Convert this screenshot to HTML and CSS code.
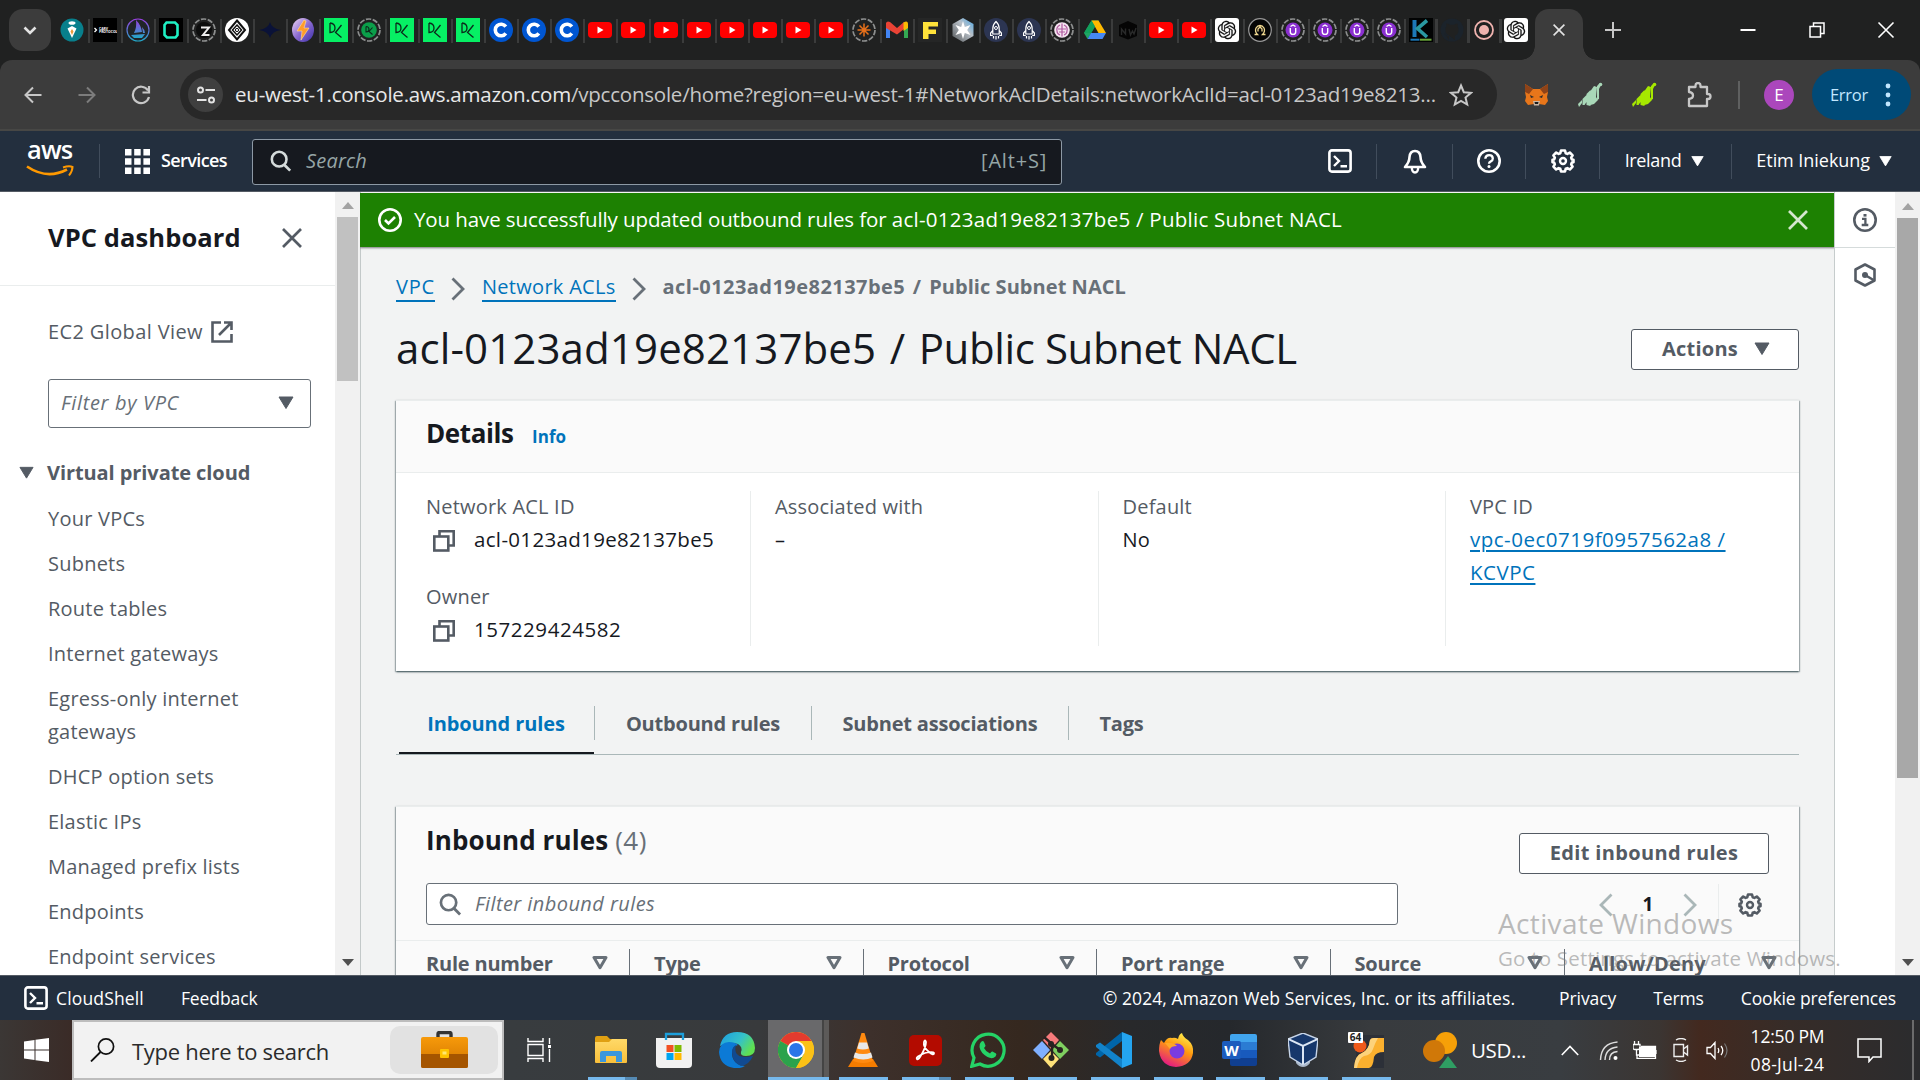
FILE: index.html
```
<!DOCTYPE html>
<html lang="en">
<head>
<meta charset="utf-8">
<title>VPC Console</title>
<link rel="stylesheet" href="styles.css">
</head>
<body>
<svg class="defs" width="0" height="0">
  <defs>
    <linearGradient id="gPurple" x1="0" y1="0" x2="0" y2="1"><stop offset="0" stop-color="#9a3fe0"/><stop offset="1" stop-color="#22a8c8"/></linearGradient>
    <linearGradient id="gZap" x1="0" y1="0" x2="1" y2="1"><stop offset="0" stop-color="#f0d8f4"/><stop offset=".5" stop-color="#8a6ad0"/><stop offset="1" stop-color="#3b2fa8"/></linearGradient>
    <linearGradient id="gHex" x1="1" y1="0" x2="0" y2="1"><stop offset="0" stop-color="#4aa8e8"/><stop offset=".4" stop-color="#b8c0c8"/><stop offset="1" stop-color="#55585a"/></linearGradient>
    <linearGradient id="gEdge" x1="0" y1="0" x2="1" y2=".5"><stop offset="0" stop-color="#1b9de2"/><stop offset=".6" stop-color="#35c1c9"/><stop offset="1" stop-color="#5fe052"/></linearGradient>
    <linearGradient id="gFox" x1=".8" y1="0" x2=".3" y2="1"><stop offset="0" stop-color="#fff44f"/><stop offset=".45" stop-color="#ff980e"/><stop offset="1" stop-color="#e31587"/></linearGradient>
    <linearGradient id="gCase" x1="0" y1="0" x2="0" y2="1"><stop offset="0" stop-color="#f79a0a"/><stop offset="1" stop-color="#d07400"/></linearGradient>
    <linearGradient id="gFolder" x1="0" y1="0" x2="0" y2="1"><stop offset="0" stop-color="#ffd968"/><stop offset="1" stop-color="#f9bf3a"/></linearGradient>
    <symbol id="yt" viewBox="0 0 24 24"><rect x="0" y="4" width="24" height="16" rx="4" fill="#f00"/><path d="M9.500 8.600v6.800l6-3.400z" fill="#fff"/></symbol>
    <symbol id="dc" viewBox="0 0 24 24"><rect width="24" height="24" fill="#06f064"/><path d="M6 5v9.500q5 0 5-4.500T6 5M17.500 7l-6 7.500 6 5" fill="none" stroke="#0b2a1c" stroke-width="1.300"/></symbol>
    <symbol id="cc" viewBox="0 0 24 24"><circle cx="12" cy="12" r="12" fill="#0056d2"/><path d="M16.800 8.600a5.800 5.800 0 1 0 0 6.800" fill="none" stroke="#fff" stroke-width="3.600"/></symbol>
    <symbol id="ring" viewBox="0 0 24 24"><circle cx="12" cy="12" r="11" fill="none" stroke="#8d8f8f" stroke-width="1.700" stroke-dasharray="5.400 1.510"/></symbol>
    <symbol id="gpt" viewBox="0 0 24 24"><rect width="24" height="24" rx="3" fill="#fff"/><path transform="translate(2.800 2.800) scale(.766)" fill="#111" stroke="#111" stroke-width=".2" d="M22.2819 9.8211a5.9847 5.9847 0 0 0-.5157-4.9108 6.0462 6.0462 0 0 0-6.5098-2.9A6.0651 6.0651 0 0 0 4.9807 4.1818a5.9847 5.9847 0 0 0-3.9977 2.9 6.0462 6.0462 0 0 0 .7427 7.0966 5.98 5.98 0 0 0 .511 4.9107 6.051 6.051 0 0 0 6.5146 2.9001A5.9847 5.9847 0 0 0 13.2599 24a6.0557 6.0557 0 0 0 5.7718-4.2058 5.9894 5.9894 0 0 0 3.9977-2.9001 6.0557 6.0557 0 0 0-.7475-7.0729zm-9.022 12.6081a4.4755 4.4755 0 0 1-2.8764-1.0408l.1419-.0804 4.7783-2.7582a.7948.7948 0 0 0 .3927-.6813v-6.7369l2.02 1.1686a.071.071 0 0 1 .038.052v5.5826a4.504 4.504 0 0 1-4.4945 4.4944zm-9.6607-4.1254a4.4708 4.4708 0 0 1-.5346-3.0137l.142.0852 4.783 2.7582a.7712.7712 0 0 0 .7806 0l5.8428-3.3685v2.3324a.0804.0804 0 0 1-.0332.0615L9.74 19.9502a4.4992 4.4992 0 0 1-6.1408-1.6464zM2.3408 7.8956a4.485 4.485 0 0 1 2.3655-1.9728V11.6a.7664.7664 0 0 0 .3879.6765l5.8144 3.3543-2.0201 1.1685a.0757.0757 0 0 1-.071 0l-4.8303-2.7865A4.504 4.504 0 0 1 2.3408 7.872zm16.5963 3.8558L13.1038 8.364 15.1192 7.2a.0757.0757 0 0 1 .071 0l4.8303 2.7913a4.4944 4.4944 0 0 1-.6765 8.1042v-5.6772a.79.79 0 0 0-.407-.667zm2.0107-3.0231l-.142-.0852-4.7735-2.7818a.7759.7759 0 0 0-.7854 0L9.409 9.2297V6.8974a.0662.0662 0 0 1 .0284-.0615l4.8303-2.7866a4.4992 4.4992 0 0 1 6.6802 4.66zM8.3065 12.863l-2.02-1.1638a.0804.0804 0 0 1-.038-.0567V6.0742a4.4992 4.4992 0 0 1 7.3757-3.4537l-.142.0805L8.704 5.459a.7948.7948 0 0 0-.3927.6813zm1.0976-2.3654l2.602-1.4998 2.6069 1.4998v2.9994l-2.5974 1.4997-2.6067-1.4997Z"/></symbol>
    <symbol id="rocket" viewBox="0 0 24 24"><circle cx="12" cy="12" r="12" fill="#2c3552"/><path d="M12 3.500q3.200 3 3.200 7v5.500H8.800v-5.500q0-4 3.200-7zM8.800 12.500L6.600 15v2.500h2.200M15.200 12.500l2.200 2.500v2.500h-2.200M9.500 18v2.500M12 18v3.500M14.500 18v2.500" fill="none" stroke="#fff" stroke-width="1.200"/><circle cx="12" cy="10" r="1.500" fill="none" stroke="#fff"/></symbol>
    <symbol id="udemy" viewBox="0 0 24 24"><circle cx="12" cy="12" r="11" fill="none" stroke="#8d8f8f" stroke-width="1.700" stroke-dasharray="5.400 1.510"/><circle cx="12" cy="12" r="7.500" fill="#8a2fd0"/><path d="M9.300 10v4q0 2.400 2.700 2.400t2.700-2.400v-4M9.500 8.500L12 7l2.500 1.500" fill="none" stroke="#fff" stroke-width="1.400"/></symbol>
    <symbol id="gear" viewBox="0 0 24 24"><path d="M10 1.500h4l.7 2.700 1.700.7 2.400-1.400 2.800 2.800-1.400 2.400.7 1.700 1.600.4v2.400l-1.600.4-.7 1.700 1.400 2.400-2.800 2.800-2.400-1.400-1.700.7-.7 2.700h-4l-.7-2.700-1.700-.7-2.400 1.400-2.800-2.800 1.400-2.400-.7-1.700-1.600-.4v-2.400l1.600-.4.7-1.700-1.400-2.400 2.800-2.800 2.400 1.400 1.700-.7z" fill="none" stroke="currentColor" stroke-width="2.600" stroke-linejoin="round"/><circle cx="12" cy="12" r="3" fill="none" stroke="currentColor" stroke-width="2.400"/></symbol>
    <symbol id="shell" viewBox="0 0 24 24"><rect x="1.400" y="1.400" width="21.200" height="21.200" rx="2.500" fill="none" stroke="currentColor" stroke-width="2.600"/><path d="M6 7l5 5-5 5M12.500 17.200H19" fill="none" stroke="currentColor" stroke-width="2.400"/></symbol>
    <symbol id="lens" viewBox="0 0 24 24"><circle cx="10" cy="10" r="8" fill="none" stroke="currentColor" stroke-width="2.800"/><path d="M15.500 16l6.500 6.500" stroke="currentColor" stroke-width="3"/></symbol>
    <symbol id="x" viewBox="0 0 20 20"><path d="M1 1l18 18M19 1L1 19" stroke="currentColor" stroke-width="2.700" fill="none"/></symbol>
    <symbol id="down" viewBox="0 0 16 13"><path d="M1 1h14L8 12.500z" fill="currentColor" stroke="currentColor" stroke-linejoin="round"/></symbol>
    <symbol id="sort" viewBox="0 0 16 14"><path d="M2 1.600h12L8 11.800z" fill="none" stroke="currentColor" stroke-width="3" stroke-linejoin="round"/></symbol>
    <symbol id="chev" viewBox="0 0 14 24"><path d="M1.500 1.500L12 12 1.500 22.500" fill="none" stroke="currentColor" stroke-width="2.800"/></symbol>
    <symbol id="copy" viewBox="0 0 22 22"><rect x="1.300" y="6.500" width="14" height="14" fill="none" stroke="currentColor" stroke-width="2.600"/><path d="M6.500 6V1.300H20.700V15.500H16" fill="none" stroke="currentColor" stroke-width="2.600"/></symbol>
  </defs>
</svg>

<header class="tabs">
  <div class="tabsearch"><svg width="14" height="9" viewBox="0 0 14 9"><path d="M1.500 1.500L7 7l5.500-5.500" fill="none" stroke="#e3e3e3" stroke-width="2.600"/></svg></div>
  <div class="strip">
    <i><svg viewBox="0 0 24 24"><circle cx="12" cy="12" r="11.500" fill="#087f8c"/><path d="M12 8l4.500 2.500L12 20l-4.500-9.500z" fill="#fff"/><path d="M12 11l1.500 2.500L12 17l-1.500-3.500z" fill="#e89b3a"/><ellipse cx="12" cy="5" rx="3.500" ry="1.800" fill="#fff"/></svg></i>
    <i><svg viewBox="0 0 24 24"><rect width="24" height="24" fill="#000"/><path d="M1.500 10l2 2-2 2" stroke="#fff" fill="none" stroke-width="1.300"/><text x="6" y="11.800" class="tiny">CARV</text><text x="6" y="15.300" class="tiny">PROTOCOL</text></svg></i>
    <i><svg viewBox="0 0 24 24"><circle cx="12" cy="12" r="11" fill="#202428" stroke="url(#gPurple)" stroke-width="1.200"/><path d="M10 2q5 5 6 12l-8 1q3-6 2-13zM16 9q3 3 3 6h-2zM5 17l14-1-3 4H8z" fill="url(#gPurple)"/></svg></i>
    <i><svg viewBox="0 0 24 24"><rect width="24" height="24" fill="#000"/><path d="M5.500 7l2-2.500h8.500l2.500 2.500v10l-2 2.500H8L5.500 17z" fill="none" stroke="#1ff0c4" stroke-width="2.600"/></svg></i>
    <i><svg viewBox="0 0 24 24"><use href="#ring"/><circle cx="12" cy="12" r="8" fill="#0c0d0d"/><path d="M9 9.500h8l-6 7.500h6.500" fill="none" stroke="#eee" stroke-width="2"/></svg></i>
    <i><svg viewBox="0 0 24 24"><circle cx="12" cy="12" r="12" fill="#fff"/><path d="M12 2.500l8 9.500-8 9.500L4 12z" fill="none" stroke="#111" stroke-width="2"/><path d="M12 7l4.500 5-4.500 5-4.500-5z" fill="none" stroke="#111" stroke-width="1.500"/><circle cx="12" cy="12" r="1.600" fill="none" stroke="#111"/></svg></i>
    <i><svg viewBox="0 0 24 24"><path d="M12 4q1.500 6.500 11 8-9.500 1.500-11 8-1.500-6.500-11-8 9.500-1.500 11-8z" fill="#0a1238"/></svg></i>
    <i><svg viewBox="0 0 24 24"><ellipse cx="12" cy="12" rx="11" ry="12" fill="url(#gZap)"/><path d="M13 2L6 13h5l-1 9 8-12h-5l2-7z" fill="#ff9c2a" stroke="#ffe0a0" stroke-width=".6"/></svg></i>
    <i><svg><use href="#dc"/></svg></i>
    <i><svg viewBox="0 0 24 24"><use href="#ring"/><circle cx="12" cy="12" r="7.800" fill="#0b9f4a"/><path d="M9 8.500v5.500q3 0 3-2.700T9 8.500M15.500 9.500L12 13.500l3.500 3" fill="none" stroke="#0b2a1c" stroke-width="1.100"/></svg></i>
    <i><svg><use href="#dc"/></svg></i>
    <i><svg><use href="#dc"/></svg></i>
    <i><svg><use href="#dc"/></svg></i>
    <i><svg><use href="#cc"/></svg></i>
    <i><svg><use href="#cc"/></svg></i>
    <i><svg><use href="#cc"/></svg></i>
    <i><svg><use href="#yt"/></svg></i>
    <i><svg><use href="#yt"/></svg></i>
    <i><svg><use href="#yt"/></svg></i>
    <i><svg><use href="#yt"/></svg></i>
    <i><svg><use href="#yt"/></svg></i>
    <i><svg><use href="#yt"/></svg></i>
    <i><svg><use href="#yt"/></svg></i>
    <i><svg><use href="#yt"/></svg></i>
    <i><svg viewBox="0 0 24 24"><use href="#ring"/><path d="M12 5.500v13M5.500 12h13M7.500 7.500l9 9M16.500 7.500l-9 9" stroke="#e8701a" stroke-width="1.500"/></svg></i>
    <i><svg viewBox="0 0 24 24"><path d="M1 20V6l4-1v15z" fill="#4285f4"/><path d="M19 20V5l4 1v14z" fill="#34a853"/><path d="M1 10V5q1-2.500 4-1l7 6 7-6v7l-7 5.500z" fill="#ea4335"/><path d="M18.500 4.500q4-2.500 4.500 1V10l-4.500 3z" fill="#fbbc04"/></svg></i>
    <i><svg viewBox="0 0 24 24"><rect width="24" height="24" fill="#252626"/><path d="M5 21V4h15v4.500H10.500v3H18V16h-7.500v5z" fill="#ffe23a"/></svg></i>
    <i><svg viewBox="0 0 24 24"><path d="M12 0l10.500 6v12L12 24 1.500 18V6z" fill="url(#gHex)"/><path d="M12 3l1.800 6 5.700-2-3.300 5 3.300 5-5.700-2L12 21l-1.800-6-5.700 2 3.300-5-3.300-5 5.700 2z" fill="#fff"/></svg></i>
    <i><svg><use href="#rocket"/></svg></i>
    <i><svg><use href="#rocket"/></svg></i>
    <i><svg viewBox="0 0 24 24"><use href="#ring"/><circle cx="12" cy="12" r="7.800" fill="#f4e4f0"/><path d="M12 5.500v13M10 7q-4 2-3 6 0 3 3 4M14 7q4 2 3 6 0 3-3 4M8 11h8M9 14h6" fill="none" stroke="#b05aa0" stroke-width="1.200"/></svg></i>
    <i><svg viewBox="0 0 24 24"><path d="M8.500 2.500h7L8 15.500 4.500 21 1 15z" fill="#1fa463"/><path d="M8.500 2.500h7L23 15h-7.500z" fill="#ffba00"/><path d="M4.500 21l3.500-6h15l-3.500 6z" fill="#4688f4"/><path d="M8.500 2.500L12 8.500 8 15H1z" fill="#12a05c"/></svg></i>
    <i><svg viewBox="0 0 24 24"><path d="M12 3l9 4v11l-9 3.500L3 18V7z" fill="#050505"/><path d="M5.500 17v-6l4 5v-5.500M13 11l1.500 6 2-4 1.500 3 2-6" fill="none" stroke="#292a2a" stroke-width="1.400"/></svg></i>
    <i><svg><use href="#yt"/></svg></i>
    <i><svg><use href="#yt"/></svg></i>
    <i><svg><use href="#gpt"/></svg></i>
    <i><svg viewBox="0 0 24 24"><circle cx="12" cy="12" r="11.300" fill="#050505" stroke="#999" stroke-width="1.200"/><path d="M6.500 16.500h3q-3-3-1.500-6.500 1.500-2.500 4-2.500t4 2.500q1.500 3.500-1.500 6.500h3M10 13.500V11l2-2 2 2v2.500" fill="none" stroke="#f0d890" stroke-width="1.300"/></svg></i>
    <i class="nar"><svg><use href="#udemy"/></svg></i>
    <i class="nar"><svg><use href="#udemy"/></svg></i>
    <i class="nar"><svg><use href="#udemy"/></svg></i>
    <i class="nar"><svg><use href="#udemy"/></svg></i>
    <i class="nar"><svg viewBox="0 0 24 24"><rect width="24" height="24" fill="#020303"/><path d="M5.500 2v17" stroke="#1c78b8" stroke-width="4"/><path d="M18 2.500L8.500 10.500 18 19" fill="none" stroke="#2a98a0" stroke-width="3.600"/><path d="M1.500 21.700h9" stroke="#1c78b8" stroke-width="2"/><path d="M11 21.700h11.500" stroke="#6aa83a" stroke-width="2"/></svg></i>
    <i class="nar"><svg viewBox="0 0 24 24"><circle cx="12" cy="12" r="11.500" fill="#1b232b"/><path d="M9 22v-4q-4 .5-4.500-3M9 17.500q-4-1.500-3.500-6 0-2 1-3-.5-1.500 0-3 2 0 3.500 1.300h4Q15.500 5.500 17.500 5.500q.5 1.500 0 3 1 1 1 3 0 5-3.500 6V22z" fill="#202121"/></svg></i>
    <i class="nar"><svg viewBox="0 0 24 24"><circle cx="12" cy="12" r="9" fill="none" stroke="#efb2ae" stroke-width="1.800"/><circle cx="12" cy="12" r="5" fill="#efb2ae"/></svg></i>
    <i class="nar last"><svg><use href="#gpt"/></svg></i>
  </div>
  <div class="acttab"><svg width="12" height="12"><use href="#x"/></svg></div>
  <svg class="plus" width="16" height="16" viewBox="0 0 16 16"><path d="M8 0v16M0 8h16" stroke="#c7c7c7" stroke-width="2"/></svg>
  <div class="win">
    <svg width="16" height="16"><path d="M0.500 8h15" stroke="#fff" stroke-width="2"/></svg>
    <svg width="16" height="16"><path d="M1 4.500h10.500V15H1zM4.500 4.500V1H15v10.500h-3.500" fill="none" stroke="#fff" stroke-width="1.500"/></svg>
    <svg width="16" height="16"><path d="M.5.500l15 15M15.500.5l-15 15" stroke="#fff" stroke-width="1.600"/></svg>
  </div>
</header>

<div class="toolbar">
  <div class="nav">
    <svg width="18" height="18" viewBox="0 0 18 18"><path d="M17.500 9H2M9 1.500L1.500 9 9 16.500" fill="none" stroke="#c7c7c7" stroke-width="2"/></svg>
    <svg width="18" height="18" viewBox="0 0 18 18"><path d="M.5 9H16M9 1.500L16.500 9 9 16.500" fill="none" stroke="#7c7c7c" stroke-width="2"/></svg>
    <svg width="20" height="20" viewBox="0 0 20 20"><path d="M17 5.500A8.200 8.200 0 1 0 18 12M18 1v6.500h-6.500" fill="none" stroke="#c7c7c7" stroke-width="2.200"/></svg>
  </div>
  <div class="omni">
    <div class="site"><svg width="18" height="18" viewBox="0 0 18 18"><path d="M8.500 4H18M0 14h9.500" stroke="#e3e3e3" stroke-width="2.200"/><circle cx="3.500" cy="4" r="2.500" fill="none" stroke="#e3e3e3" stroke-width="2"/><circle cx="14.500" cy="14" r="2.500" fill="none" stroke="#e3e3e3" stroke-width="2"/></svg></div>
    <span class="url"><b>eu-west-1.console.aws.amazon.com</b>/vpcconsole/home?region=eu-west-1#NetworkAclDetails:networkAclId=acl-0123ad19e8213...</span>
    <svg class="star" width="24" height="24" viewBox="0 0 24 24"><path d="M12 2.500l2.800 6.700 7.200.6-5.500 4.700 1.700 7L12 17.800l-6.200 3.700 1.700-7L2 9.800l7.200-.6z" fill="none" stroke="#c7c7c7" stroke-width="2"/></svg>
  </div>
  <div class="ext">
    <svg width="25" height="24" viewBox="0 0 25 24"><path d="M1 1l8 5h7l8-5v8l-1 5 1 4-3 4-6-1-2.500 1-2.500-1-6 1-3-4 1-4-1-5z" fill="#e8761a"/><path d="M1 1l8 5-4 5-4-2zM24 1l-8 5 4 5 4-2z" fill="#8f4318"/><path d="M9 18h7l-1 4.500h-5z" fill="#c9b6a6"/><path d="M10.500 19h4l-.5 2h-3z" fill="#1b1b1b"/><path d="M6 12l4 2-3 1zM19 12l-4 2 3 1z" fill="#2c2c2c"/></svg>
    <svg class="e2" width="26" height="26" viewBox="0 0 26 26" fill="#a9d8b8"><path d="M1 22l4-4v3l-3 4zM5.500 17l4-4v7l-2 3h-2zM9.500 12l4-4v16l-4-1zM13.500 9l3.500-5 3 1-1 10 2 3-4 4-3.500 1zM20 4l2-2 2 1-2 4v10l-2 1z"/><circle cx="23.500" cy="2.500" r="1.800"/></svg>
    <svg class="e3" width="26" height="26" viewBox="0 0 26 26" fill="#a6e800"><path d="M1 22l4-4v3l-3 4zM5.500 17l4-4v7l-2 3h-2zM9.500 12l4-4v16l-4-1zM13.500 9l3.500-5 3 1-1 10 2 3-4 4-3.500 1zM20 4l2-2 2 1-2 4v10l-2 1z"/><circle cx="23.500" cy="2.500" r="1.800"/></svg>
    <svg class="e4" width="25" height="26" viewBox="0 0 25 26"><path d="M2 5h6.500V3.500a2.500 2.500 0 0 1 5 0V5H20v7h1a2.500 2.500 0 0 1 0 5h-1v7H2v-7q4-.5 4-3.500T2 10z" fill="none" stroke="#c7c7c7" stroke-width="2.300" stroke-linejoin="round"/></svg>
    <span class="bar"></span>
    <span class="ava">E</span>
    <span class="err">Error<svg width="6" height="24" viewBox="0 0 6 24" fill="#c2e7ff"><circle cx="3" cy="3" r="2.400"/><circle cx="3" cy="12" r="2.400"/><circle cx="3" cy="21" r="2.400"/></svg></span>
  </div>
</div>

<nav class="aws">
  <div class="logo"><span>aws</span><svg width="48" height="13" viewBox="0 0 48 13"><path d="M1 1.500Q21 15 41 4.500" fill="none" stroke="#f90" stroke-width="2.600"/><path d="M37 2.500Q43 .5 46.500 2 46.500 6 43 10.500" fill="none" stroke="#f90" stroke-width="2"/></svg></div>
  <div class="services"><svg width="25" height="25" viewBox="0 0 25 25" fill="#fff"><path d="M0 0h6.500v6.500H0zM9.200 0h6.500v6.500H9.200zM18.400 0H25v6.500h-6.600zM0 9.200h6.500v6.500H0zM9.200 9.200h6.500v6.500H9.200zM18.400 9.200H25v6.500h-6.600zM0 18.400h6.500V25H0zM9.200 18.400h6.500V25H9.200zM18.400 18.400H25V25h-6.600z"/></svg><span>Services</span></div>
  <div class="search"><svg width="22" height="22"><use href="#lens"/></svg><em>Search</em><span>[Alt+S]</span></div>
  <div class="tools">
    <div class="t1"><svg width="24" height="24"><use href="#shell"/></svg></div>
    <div class="t2"><svg width="24" height="25" viewBox="0 0 24 25"><path d="M12 2q-5 0-5.500 6Q6.500 13 2 18h20q-4.500-5-4.500-10Q17 2 12 2z" fill="none" stroke="#fff" stroke-width="2.600" stroke-linejoin="round"/><path d="M8.800 18.500q.2 5 3.200 5t3.200-5" fill="none" stroke="#fff" stroke-width="2.400"/></svg></div>
    <div class="t3"><svg width="24" height="24" viewBox="0 0 24 24"><circle cx="12" cy="12" r="10.700" fill="none" stroke="#fff" stroke-width="2.600"/><path d="M8.300 9.800q.2-3.600 3.800-3.600t3.700 3.200q0 2-2 3-1.800.8-1.800 2.400" fill="none" stroke="#fff" stroke-width="2.300"/><circle cx="12" cy="17.600" r="1.500" fill="#fff"/></svg></div>
    <div class="t4"><svg width="24" height="24"><use href="#gear"/></svg></div>
    <div class="t5"><span>Ireland</span><svg width="13" height="12"><use href="#down"/></svg></div>
    <div class="t6"><span>Etim Iniekung</span><svg width="13" height="12"><use href="#down"/></svg></div>
  </div>
</nav>

<div class="page">
  <aside class="side">
    <div class="sidehead"><h2>VPC dashboard</h2><svg width="20" height="20"><use href="#x"/></svg></div>
    <div class="sidebody">
      <div class="ec2"><span>EC2 Global View</span><svg width="22" height="22" viewBox="0 0 22 22"><path d="M10 1.500H1.500v19h19V13M8 14L20 2M13 1.500h7.500V9" fill="none" stroke="currentColor" stroke-width="2.600"/></svg></div>
      <div class="select"><em>Filter by VPC</em><svg width="16" height="13"><use href="#down"/></svg></div>
      <div class="group"><svg width="15" height="13"><use href="#down"/></svg><b>Virtual private cloud</b></div>
      <ul>
        <li>Your VPCs</li><li>Subnets</li><li>Route tables</li><li>Internet gateways</li><li>Egress-only internet<br>gateways</li><li>DHCP option sets</li><li>Elastic IPs</li><li>Managed prefix lists</li><li>Endpoints</li><li>Endpoint services</li>
      </ul>
    </div>
  </aside>
  <div class="sb sb1"><svg width="12" height="7" viewBox="0 0 12 7"><path d="M6 0l6 7H0z" fill="#a3a3a3"/></svg><span></span><svg width="12" height="7" viewBox="0 0 12 7"><path d="M0 0h12L6 7z" fill="#505050"/></svg></div>
  <main>
    <div class="flash"><svg width="24" height="24" viewBox="0 0 24 24"><circle cx="12" cy="12" r="10.700" fill="none" stroke="#fff" stroke-width="2.600"/><path d="M7 12l3.500 3.500L17 9" fill="none" stroke="#fff" stroke-width="2.600"/></svg><p>You have successfully updated outbound rules for <span>acl-0123ad19e82137be5 / Public Subnet NACL</span></p><svg width="20" height="20"><use href="#x"/></svg></div>
    <div class="content">
      <div class="crumbs"><a>VPC</a><svg width="14" height="24"><use href="#chev"/></svg><a class="c2">Network ACLs</a><svg width="14" height="24"><use href="#chev"/></svg><b>acl-0123ad19e82137be5 / <span>Public Subnet NACL</span></b></div>
      <div class="titlerow"><h1>acl-0123ad19e82137be5 / <span>Public Subnet NACL</span></h1><button class="btn actions"><span>Actions</span><svg width="16" height="13"><use href="#down"/></svg></button></div>
      <section class="card details">
        <div class="cardhead"><h2>Details</h2><a>Info</a></div>
        <div class="cols">
          <div class="col">
            <label>Network ACL ID</label>
            <p class="cp"><svg width="22" height="22"><use href="#copy"/></svg><span>acl-0123ad19e82137be5</span></p>
            <label class="own">Owner</label>
            <p class="cp"><svg width="22" height="22"><use href="#copy"/></svg><span class="num">157229424582</span></p>
          </div>
          <div class="col"><label>Associated with</label><p>–</p></div>
          <div class="col"><label>Default</label><p>No</p></div>
          <div class="col"><label>VPC ID</label><p><a class="lnk">vpc-0ec0719f0957562a8 /<br>KCVPC</a></p></div>
        </div>
      </section>
      <div class="tablist"><div class="tab on">Inbound rules</div><div class="tab w2">Outbound rules</div><div class="tab w3">Subnet associations</div><div class="tab w4">Tags</div></div>
      <section class="card rules">
        <div class="ruleshead"><h2>Inbound rules <i>(4)</i></h2><button class="btn edit">Edit inbound rules</button></div>
        <div class="filterrow">
          <div class="filter"><svg width="23" height="23"><use href="#lens"/></svg><em>Filter inbound rules</em></div>
          <div class="pager"><svg class="prev" width="14" height="26"><use href="#chev"/></svg><b>1</b><svg class="next" width="14" height="26"><use href="#chev"/></svg><div class="gearbox"><svg width="24" height="24"><use href="#gear"/></svg></div></div>
        </div>
        <div class="thead">
          <div class="th"><span>Rule number</span><svg width="16" height="14"><use href="#sort"/></svg></div>
          <div class="th"><span>Type</span><svg width="16" height="14"><use href="#sort"/></svg></div>
          <div class="th"><span>Protocol</span><svg width="16" height="14"><use href="#sort"/></svg></div>
          <div class="th"><span>Port range</span><svg width="16" height="14"><use href="#sort"/></svg></div>
          <div class="th"><span>Source</span><svg width="16" height="14"><use href="#sort"/></svg></div>
          <div class="th"><span class="ad">Allow/Deny</span><svg width="16" height="14"><use href="#sort"/></svg></div>
        </div>
      </section>
    </div>
  </main>
  <aside class="help">
    <div><svg width="24" height="24" viewBox="0 0 24 24"><circle cx="12" cy="12" r="10.700" fill="none" stroke="currentColor" stroke-width="2.600"/><path d="M9 10.800h3.400V17M8.700 17h6.600" fill="none" stroke="currentColor" stroke-width="2.300"/><rect x="10.500" y="6" width="3" height="2.600" fill="currentColor"/></svg></div>
    <div><svg width="22" height="24" viewBox="0 0 22 24"><path d="M11 1.500l9.500 5v11l-9.500 5-9.500-5v-11z" fill="none" stroke="currentColor" stroke-width="2.600" stroke-linejoin="round"/><circle cx="11" cy="12" r="3" fill="currentColor"/><path d="M11 12l8.500 5" stroke="currentColor" stroke-width="2.600"/></svg></div>
  </aside>
  <div class="sb sb2"><svg width="12" height="7" viewBox="0 0 12 7"><path d="M6 0l6 7H0z" fill="#a3a3a3"/></svg><span></span><svg width="12" height="7" viewBox="0 0 12 7"><path d="M0 0h12L6 7z" fill="#505050"/></svg></div>
</div>

<footer class="foot">
  <svg width="24" height="24"><use href="#shell"/></svg><span class="f1">CloudShell</span><span class="f2">Feedback</span>
  <span class="f3">© 2024, Amazon Web Services, Inc. or its affiliates.</span><span class="f4">Privacy</span><span class="f5">Terms</span><span class="f6">Cookie preferences</span>
</footer>

<div class="taskbar">
  <div class="start"><svg width="25" height="24" viewBox="0 0 25 24" fill="#fff"><path d="M0 3.500l10.500-1.600v9.500H0zM11.500 1.700L25 0v11.400H11.500zM0 12.500h10.500V22L0 20.500zM11.500 12.500H25V24l-13.500-1.800z"/></svg></div>
  <div class="wsearch"><svg width="25" height="24" viewBox="0 0 25 24"><circle cx="16" cy="8.500" r="7.600" fill="none" stroke="#111" stroke-width="1.700"/><path d="M10.500 14L1 23.500" stroke="#111" stroke-width="1.800"/></svg><span>Type here to search</span>
    <div class="case"><svg width="47" height="38" viewBox="0 0 47 38"><path d="M17 7V3q0-1.500 1.500-1.500h10q1.500 0 1.500 1.500v4" fill="none" stroke="#333" stroke-width="3.400"/><rect x="0" y="6" width="47" height="31" rx="2" fill="url(#gCase)"/><path d="M0 23h47v12q0 2-2 2H2q-2 0-2-2z" fill="#a55500"/><rect x="19" y="18" width="9" height="9" rx="1" fill="#ffc400"/><rect x="21.500" y="20.500" width="4" height="3" fill="#ffe870"/></svg></div>
  </div>
  <div class="apps">
    <div class="app tv"><svg width="25" height="24" viewBox="0 0 25 24"><path d="M1 0v3.500h15V0M1 6.500h15v11H1zM1 24v-3.500h15V24M22.500 0v6M22.500 11v13" fill="none" stroke="#fff" stroke-width="1.400"/><rect x="21" y="7" width="3" height="3" fill="#fff"/></svg></div>
    <div class="app"><svg width="32" height="28" viewBox="0 0 32 28"><path d="M0 2q0-2 2-2h10l3 3H32v4H0z" fill="#e0a012"/><path d="M0 6h14l3-3h15v23q0 1-1 1H1q-1 0-1-1z" fill="url(#gFolder)"/><path d="M5 26V17q0-2 2-2h18q2 0 2 2v9h-6v-6H11v6z" fill="#3c97dc"/></svg><u class="split"></u></div>
    <div class="app"><svg width="36" height="36" viewBox="0 0 36 36"><path d="M0 6h36v26q0 4-4 4H4q-4 0-4-4z" fill="#f1f1f1"/><path d="M10 8V2h17v6" fill="none" stroke="#1c9fdc" stroke-width="2.300"/><path d="M10.500 13h7v7h-7z" fill="#f25022"/><path d="M18.500 13h7v7h-7z" fill="#7fba00"/><path d="M10.500 21h7v7h-7z" fill="#00a4ef"/><path d="M18.500 21h7v7h-7z" fill="#ffb900"/></svg></div>
    <div class="app"><svg width="36" height="36" viewBox="0 0 36 36"><path d="M1 14Q4 0 18 0q17 0 18 16 0 8-9 8-6 0-5-4 2-5-3-8-9-3-18 2z" fill="url(#gEdge)"/><path d="M0 20q1-10 10-10 6 0 9 3-6 1-6 9 1 11 13 12-5 3-11 2Q1 34 0 20z" fill="#0c7ad6"/><path d="M13 20q0-5 4-7-3 11 8 12 5 0 9-1-4 9-12 10-9-4-9-14z" fill="#114a91"/></svg></div>
    <div class="app chrome"><svg width="36" height="36" viewBox="0 0 36 36"><circle cx="18" cy="18" r="18" fill="#fbc116"/><path d="M18 18L2.400 9A18 18 0 0 1 33.600 9z" fill="#e33b2e"/><path d="M18 18L2.400 9A18 18 0 0 0 18 36l8-14z" fill="#2ba24c"/><path d="M18 9h15.600A18 18 0 0 1 18 36l8-14z" fill="#fbc116"/><circle cx="18" cy="18" r="9" fill="#fff"/><circle cx="18" cy="18" r="7" fill="#2a76e8"/></svg><u class="full"></u></div>
    <div class="app"><svg width="30" height="34" viewBox="0 0 30 34"><path d="M5 26h20l5 8H0z" fill="#f57c00"/><path d="M13.500 0h3L25 28q-10 4-20 0z" fill="#ff8a10"/><path d="M11 9.500h8l1.800 6q-6 2-11.600 0zM7 19.500q8 3 16 0l1.500 5q-9 4-19 0z" fill="#e8e8e8"/></svg><u></u></div>
    <div class="app"><svg width="33" height="31" viewBox="0 0 33 31"><rect width="33" height="31" rx="5" fill="#b30b00"/><path d="M8 24q-2-2 8-6 8-2 9 0 0 3-5-1-6-5-5-10 1-3 2 0 0 6-6 15-2 3-3 2z" fill="none" stroke="#fff" stroke-width="1.800"/></svg><u class="split s2"></u></div>
    <div class="app"><svg width="36" height="36" viewBox="0 0 36 36"><path d="M1.700 34.300l2.300-8.500A16 16 0 1 1 10 32z" fill="none" stroke="#25d366" stroke-width="3.200"/><path d="M11 10q2-2 3 0l1.500 3.500q0 1-1.500 2.500 2 4 6 5.500 1.500-2.500 2.500-2L26 21.500q1 .5-.5 3-3 3-8 .5-7-4-8-10-.5-3 1.500-5z" fill="#25d366"/></svg><u></u></div>
    <div class="app"><svg width="36" height="36" viewBox="0 0 36 36"><path d="M18 0l8 8-8 9-8-9z" fill="#f77b7b"/><path d="M9 9l8 9-8 9-9-9z" fill="#7fb0ff"/><path d="M27 9l9 9-9 9-8-9z" fill="#7fcf5f"/><path d="M18 19l8 8-8 9-8-9z" fill="#ffe27a"/><path d="M11 5l8 7v16M19 12l8 6" fill="none" stroke="#282220" stroke-width="2.400"/><circle cx="18" cy="12" r="3" fill="#282220"/><circle cx="27" cy="18" r="3" fill="#282220"/><circle cx="18.500" cy="26" r="3" fill="#282220"/></svg><u></u></div>
    <div class="app"><svg width="36" height="36" viewBox="0 0 36 36"><path d="M26 0v9L4 25.500 0 23v-2z" fill="#0065a9"/><path d="M26 36v-9L4 10.500 0 13v2z" fill="#1283ca"/><path d="M26 0l10 4v28l-10 4z" fill="#24a5f0"/></svg><u></u></div>
    <div class="app"><svg width="35" height="34" viewBox="0 0 35 34"><path d="M2 7l3 3Q8 4 13 5q3-1 6 1 1-5 4-6 1 4 6 7 6 5 5 13-2 13-17 14Q2 33 0 18 0 11 2 7z" fill="url(#gFox)"/><circle cx="18" cy="18" r="7.500" fill="#7a3ce0"/><path d="M6 10q8-1 12 3-6 0-7 3z" fill="#ffa828"/></svg><u></u></div>
    <div class="app"><svg width="35" height="32" viewBox="0 0 35 32"><path d="M10 0h23q2 0 2 2v6H8V2q0-2 2-2z" fill="#41a5ee"/><path d="M8 8h27v8H8z" fill="#2b7cd3"/><path d="M8 16h27v8H8z" fill="#185abd"/><path d="M8 24h27v6q0 2-2 2H10q-2 0-2-2z" fill="#103f91"/><rect y="7" width="19" height="18" rx="2" fill="#1b5cbe"/><text x="9.500" y="21.500" text-anchor="middle" class="wd">W</text></svg><u></u></div>
    <div class="app"><svg width="30" height="34" viewBox="0 0 30 34"><path d="M15 24q-8 2-7 6 3 4 7 4t7-4q1-4-7-6z" fill="#a9b6c8"/><path d="M15 0l15 6-2 18-13 8L2 24 0 6z" fill="#16376b" stroke="#c6d4e8" stroke-width="1.400"/><path d="M0 6l15 7 15-7M15 13v18" fill="none" stroke="#dbe6f4" stroke-width="2"/></svg><u></u></div>
    <div class="app"><svg width="36" height="36" viewBox="0 0 36 36"><rect x="8" y="3" width="28" height="33" fill="#2c3038"/><circle cx="12" cy="14" r="6.500" fill="#f05a1a"/><path d="M22 8q1-2 4-2h10v14q-8 0-10 5-1 11-5 11H6q1-13 8-15 7-3 8-13z" fill="#fbb02e"/><path d="M22 8q1-2 4-2h4q-3 5-5 11t-9 7q-5 2-7 12H6q1-13 8-15 7-3 8-13z" fill="#fdd27a"/><rect width="15" height="11" rx="1" fill="#fff"/><text x="7.500" y="9" text-anchor="middle" class="n64">64</text></svg><u></u></div>
  </div>
  <div class="coins"><svg width="34" height="36" viewBox="0 0 34 36"><circle cx="23" cy="11" r="11" fill="#f6a008"/><circle cx="11" cy="19" r="11" fill="#d07808"/><path d="M25 24l9 12H16z" fill="#2f9e63"/></svg><span>USD...</span></div>
  <div class="tray">
    <svg width="18" height="11" viewBox="0 0 18 11"><path d="M.8 10L9 1.500 17.200 10" fill="none" stroke="#fff" stroke-width="1.600"/></svg>
    <svg class="wifi" width="20" height="21" viewBox="0 0 20 21"><circle cx="16.500" cy="18" r="2" fill="#fff"/><path d="M10.500 20q0-8 8-8.500M6 20Q6.500 8 18.500 7M1.500 20Q2 3.500 18.500 2" fill="none" stroke="#ddd" stroke-width="1.400"/></svg>
    <svg class="bat" width="24" height="18" viewBox="0 0 24 18"><path d="M6 6h16v10H6z" fill="#fff"/><path d="M4 14v3.500h18.500v-12H8M23 9v4M1.500 0v3M5.500 0v3M0 3.500h7v3q0 2-2 2H2q-2 0-2-2zM3.500 9v5H8" fill="none" stroke="#fff" stroke-width="1.300"/></svg>
    <svg class="cam" width="17" height="24" viewBox="0 0 17 24"><path d="M1 6.500h9.500v12H1zM10.500 11l4-3v9l-4-3M3 2q5-3 10 0M3 22q5 3 10 0" fill="none" stroke="#eee" stroke-width="1.400"/></svg>
    <svg class="vol" width="23" height="19" viewBox="0 0 23 19"><path d="M1 6.500h3.500L9 1.500v16l-4.500-5H1zM12 7q1.500 2.500 0 5M15 5q3.500 4.500 0 9" fill="none" stroke="#fff" stroke-width="1.300"/><path d="M18.500 2.500q5 7 0 14" fill="none" stroke="#777" stroke-width="1.200"/></svg>
    <div class="clock"><span>12:50 PM</span><span class="dt">08-Jul-24</span></div>
    <svg class="note" width="25" height="25" viewBox="0 0 25 25"><path d="M1 1h23v18h-8l-4 4.500V19H1z" fill="none" stroke="#fff" stroke-width="1.500"/></svg>
    <span class="edge"></span>
  </div>
</div>
<div class="activate"><p>Activate Windows</p><p class="sub">Go to Settings to activate Windows.</p></div>
</body>
</html>
```
FILE: styles.css
```
* { box-sizing: border-box; }
html, body { margin: 0; height: 100%; }
body { width: 1920px; height: 1080px; overflow: hidden; display: flex; flex-direction: column; font: 20px/33px "Open Sans", "Noto Sans", sans-serif; color: #16191f; position: relative; }
svg { display: block; flex: none; }
.defs { position: absolute; }
h1, h2, p, ul { margin: 0; padding: 0; font-weight: 400; }
ul { list-style: none; }
span, b, em { white-space: nowrap; }

/* browser tab strip */
.tabs { height: 60px; flex: none; background: #202121; display: flex; padding-left: 9px; }
.tabsearch { width: 42px; height: 42px; margin: 9px 4.500px 0 0; border-radius: 14px; background: #3c3c3c; display: flex; align-items: center; justify-content: center; }
.strip { display: flex; }
.strip i { width: 33px; height: 60px; display: flex; align-items: center; justify-content: center; position: relative; }
.strip i.nar { width: 31.900px; position: relative; left: .5px; }
.strip i svg { width: 24px; height: 24px; }
.strip i::after { content: ""; position: absolute; right: -1.500px; top: 19px; width: 2.500px; height: 24px; background: #3b3c3c; }
.strip i.last::after { display: none; }
.tiny { font: 700 3.400px "Open Sans", sans-serif; fill: #fff; }
.acttab { width: 48px; height: 51px; margin: 9px 0 0 3.300px; background: #3c3c3c; border-radius: 14px 14px 0 0; display: flex; align-items: center; justify-content: center; color: #e3e3e3; position: relative; padding-bottom: 9px; }
.acttab::before, .acttab::after { content: ""; position: absolute; bottom: 0; width: 14px; height: 14px; }
.acttab::before { left: -14px; background: radial-gradient(circle at 0 0, transparent 13.500px, #3c3c3c 14px); }
.acttab::after { right: -14px; background: radial-gradient(circle at 14px 0, transparent 13.500px, #3c3c3c 14px); }
.plus { margin: 22px 0 0 22px; }
.win { margin: 22px 26px 0 auto; display: flex; gap: 53px; }
.win svg { overflow: visible; }

/* browser toolbar */
.toolbar { height: 71px; flex: none; background: #3c3c3c; border-bottom: 2px solid #474745; border-radius: 12px 12px 0 0; display: flex; align-items: center; position: relative; }
.toolbar::before { content: ""; position: absolute; z-index: -1; inset: 0 0 40px; background: #202121; }
.nav { width: 180px; display: flex; align-items: center; padding-left: 24px; gap: 36px; }
.nav svg:nth-child(3) { margin-left: -1px; }
.omni { width: 1317px; height: 51px; border-radius: 26px; background: #282828; display: flex; align-items: center; padding-left: 8px; }
.site { width: 35px; height: 35px; border-radius: 50%; background: #3f3f3f; display: flex; align-items: center; justify-content: center; margin-right: 12px; }
.url { font-size: 20.500px; letter-spacing: -.22px; color: #c7c7c7; width: 1214px; }
.url b { font-weight: 400; color: #e8e8e8; }
.ext { flex: 1; display: flex; align-items: center; padding-left: 27px; }
.e2, .e3 { margin-left: 28px; }
.e4 { margin-left: 30px; }
.bar { width: 2px; height: 28px; background: #5f6060; margin: 0 24px 0 26px; }
.ava { width: 30px; height: 30px; border-radius: 50%; background: #ab47bc; color: #fff; font: 17px/30px "Open Sans", sans-serif; text-align: center; margin-right: 18px; }
.err { width: 99px; height: 51px; border-radius: 26px; background: #004a77; color: #c2e7ff; display: flex; align-items: center; padding-left: 18px; gap: 17px; font-size: 16.500px; letter-spacing: -.3px; }

/* console navigation */
.aws { height: 61px; flex: none; background: #232f3e; border-bottom: 1px solid #545b64; display: flex; align-items: center; color: #fff; }
.logo { width: 100px; height: 34px; border-right: 1px solid #414d5c; padding-left: 26px; }
.logo span { display: block; font: 600 25.500px/17px "Open Sans", sans-serif; letter-spacing: -.9px; margin: -3px 0 7px 1px; height: 17px; }
.services { width: 152px; display: flex; align-items: center; padding-left: 25px; gap: 11px; font-size: 18px; font-weight: 600; letter-spacing: -.6px; }
.search { width: 810px; height: 46px; border: 1px solid #8d99a5; border-radius: 3px; background: #16191f; display: flex; align-items: center; padding: 0 14px 2px 17px; margin-top: 1px; }
.search em { margin-left: 14px; color: #95a5a6; letter-spacing: .2px; }
.search span { margin-left: auto; color: #95a5a6; letter-spacing: .8px; }
.search svg { color: #d5dbdb; }
.tools { flex: 1; display: flex; height: 35px; }
.tools div { display: flex; align-items: center; justify-content: center; border-right: 1px solid #414d5c; font-size: 18px; font-weight: 500; letter-spacing: -.35px; }
.tools span, .services span { margin-top: -2px; }
.tools .t1 { width: 315px; padding-left: 241px; }
.t2 { width: 76px; } .t3 { width: 73px; } .t4 { width: 74px; }
.t5 { width: 132px; gap: 10px; }
.tools .t5 { padding-right: 2px; }
.tools .t6 { flex: 1; border: 0; gap: 9px; justify-content: flex-end; padding-right: 28px; letter-spacing: -.05px; }

.page { height: 783px; flex: none; display: flex; overflow: hidden; }
.side { width: 335px; background: #fff; color: #545b64; overflow: hidden; }
.sidehead { height: 94px; border-bottom: 1px solid #eaeded; display: flex; align-items: center; justify-content: space-between; padding: 0 33px 2px 48px; }
.sidehead h2 { font-size: 25.500px; font-weight: 700; letter-spacing: .1px; color: #16191f; }
.sidehead svg { color: #545b64; }
.sidebody { padding: 29px 24px 0 48px; }
.ec2 { display: flex; align-items: center; gap: 8px; letter-spacing: .38px; }
.select { height: 49px; margin-top: 31px; border: 1px solid #687078; border-radius: 3px; display: flex; align-items: center; justify-content: space-between; padding: 0 16px 2px 12px; color: #687078; }
.select em { letter-spacing: .67px; }
.select svg { color: #545b64; }
.group { display: flex; align-items: center; gap: 13px; margin: 28px 0 13px -29px; font-size: 20px; letter-spacing: -.08px; }
.side ul { letter-spacing: .23px; }
.side li { margin-bottom: 12px; white-space: nowrap; }

.sb { width: 25px; background: #f1f1f1; display: flex; flex-direction: column; align-items: center; padding: 10px 0 9px; }
.sb span { width: 21px; background: #c1c1c1; }
.sb1 span { height: 164px; margin: 8px 0 auto; }
.sb2 { padding-top: 11px; }
.sb2 span { height: 560px; margin: 8px 0 auto; background: #a8a8a8; }

main { width: 1475px; background: #f2f3f3; padding-top: 1px; box-shadow: inset 1px 0 0 #c3c9c9, inset 0 1px 0 #fff; overflow: hidden; }
.flash { height: 54px; background: #1d8102; color: #fff; display: flex; align-items: center; padding: 0 27px 0 18px; font-weight: 500; font-size: 20.500px; box-shadow: 0 1px 2px rgba(0,0,0,.5); }
.flash p { font-weight: 500; margin: -2px 0 0 12px; letter-spacing: -.1px; white-space: nowrap; }
.flash p span { letter-spacing: .26px; }
.flash svg:last-child { margin-left: auto; color: #d5e6cf; }
.content { padding: 22px 36px 0; }
.crumbs { height: 36px; display: flex; align-items: center; color: #687078; }
.crumbs a { color: #0073bb; line-height: 26px; border-bottom: 2px solid #0073bb; letter-spacing: .8px; margin-top: 2px; }
.crumbs svg { margin: 3px 17px 0 16px; }
.crumbs .c2 { letter-spacing: .3px; }
.crumbs b { letter-spacing: .45px; font-weight: 700; word-spacing: 2px; margin-top: -2px; }
.crumbs b span { letter-spacing: .05px; word-spacing: 0; }
.titlerow { display: flex; justify-content: space-between; margin-top: 17px; height: 54px; }
h1 { font-size: 42px; line-height: 54px; white-space: nowrap; letter-spacing: .12px; word-spacing: 2.500px; margin-top: -1px; }
h1 span { letter-spacing: -.4px; word-spacing: 0; }
.btn { border: 1px solid #545b64; border-radius: 3px; background: #fff; color: #545b64; height: 41px; font: 700 20px "Open Sans", sans-serif; display: flex; align-items: center; justify-content: center; padding: 0 0 2px; }
.actions { width: 168px; margin-top: 7px; gap: 16px; padding-left: 2px; letter-spacing: .25px; }
.card { background: #fff; box-shadow: 0 1px 2px rgba(0,28,36,.55), 1px 1px 1px rgba(0,28,36,.2), -1px 1px 1px rgba(0,28,36,.2); border-top: 1px solid #eaeded; }
.card h2 { font-size: 26px; font-weight: 700; letter-spacing: -.4px; }
.details { height: 271px; margin-top: 24px; }
.cardhead { height: 72px; background: #fafafa; border-bottom: 1px solid #eaeded; display: flex; align-items: center; padding: 0 30px 6px; }
.cardhead a { font: 700 17px/20px "Open Sans", sans-serif; color: #0073bb; margin: 6px 0 0 18.500px; }
.cols { display: grid; grid-template-columns: 325px 347.500px 347.500px 1fr; height: 155px; margin: 18px 0 0 30px; }
.col { border-right: 1px solid #eaeded; padding-left: 24px; line-height: 33px; }
.col:first-child { padding-left: 0; }
.col:last-child { border: 0; }
.col label { display: block; color: #545b64; letter-spacing: .2px; line-height: 33px; margin-top: -1px; }
.col .own { margin-top: 24px; }
.col p { letter-spacing: .2px; }
.cp { display: flex; align-items: center; padding-left: 7px; gap: 19px; }
.cp svg { color: #545b64; margin-top: 2px; }
.cp span { font-size: 20.500px; letter-spacing: .33px; }
.cp .num { letter-spacing: .55px; }
.lnk { color: #0073bb; font-size: 20.500px; letter-spacing: .5px; text-decoration: underline; text-decoration-thickness: 2px; text-underline-offset: 3px; }
.tablist { height: 83px; border-bottom: 1px solid #aab7b8; margin-top: 1px; display: flex; align-items: flex-end; font-weight: 700; color: #545b64; }
.tab { height: 64px; padding-top: 17px; text-align: center; white-space: nowrap; letter-spacing: -.2px; position: relative; }
.tab:not(:last-child)::after { content: ""; position: absolute; right: 0; top: 16px; width: 1px; height: 34px; background: #aab7b8; }
.on { width: 199px; padding-left: 1px; color: #0073bb; letter-spacing: -.1px; }
.on::before { content: ""; position: absolute; left: 3px; right: 1px; bottom: 0; height: 2px; background: #16191f; }
.w2 { width: 217px; padding-right: 1px; } .w3 { width: 257px; padding-right: 1px; } .w4 { width: 105px; }
.rules { margin-top: 51px; height: 300px; background: #fafafa; }
.ruleshead { height: 76px; display: flex; justify-content: space-between; padding: 17px 30px 0; }
.ruleshead i { font-style: normal; font-weight: 400; color: #687078; letter-spacing: .5px; }
.card.rules h2 { letter-spacing: .12px; }
.edit { width: 250px; margin-top: 9px; letter-spacing: .35px; }
.filterrow { display: flex; padding: 0 30px; height: 57px; }
.filter { width: 972px; height: 42px; border: 1px solid #687078; border-radius: 3px; background: #fff; display: flex; align-items: center; padding-left: 12px; gap: 13px; color: #687078; }
.filter em { letter-spacing: .43px; margin-top: -2px; }
.pager { flex: 1; height: 44px; display: flex; align-items: center; justify-content: flex-end; }
.pager b { width: 12px; margin: -2px 29px 0; font-size: 19px; text-align: center; }
.prev, .next { color: #aab7b8; }
.prev { transform: scaleX(-1); }
.gearbox { border-left: 1px solid #eaeded; height: 42px; margin-left: 21px; padding: 0 7px 0 19px; display: flex; align-items: center; color: #545b64; }
.thead { border-top: 1px solid #eaeded; height: 60px; display: grid; grid-template-columns: 234px 233.500px 233.500px 233.500px 234.500px 1fr; }
.th { display: flex; justify-content: space-between; padding: 4px 22px 0 24px; font-weight: 700; font-size: 20px; color: #545b64; letter-spacing: -.2px; position: relative; margin-top: 2px; }
.th:first-child { padding-left: 30px; }
.th:last-child { padding-right: 22px; }
.th svg { margin-top: 9px; color: #687078; }
.th:not(:last-child)::after { content: ""; position: absolute; right: 0; top: 6px; bottom: 0; width: 1px; background: #687078; }
.th .ad { letter-spacing: .2px; }

.help { width: 60px; background: #fff; color: #545b64; box-shadow: -1px 0 0 #c6cccc; }
.help div { height: 54px; display: flex; align-items: center; justify-content: center; }
.help div:first-child { border-bottom: 1px solid #d5dbdb; padding-top: 1px; height: 56px; }

.foot { height: 45px; flex: none; background: #232f3e; border-top: 1px solid #545b64; color: #fff; display: flex; align-items: center; font-size: 17.500px; font-weight: 500; padding: 0 24px; letter-spacing: -.1px; }
.f1 { margin: 0 37px 0 8px; letter-spacing: .15px; }
.f3 { margin-left: auto; margin-right: 44px; letter-spacing: .08px; }
.f4 { margin-right: 37px; } .f5 { margin-right: 37px; }
.f6 { letter-spacing: -.14px; }

/* windows taskbar */
.taskbar { height: 60px; flex: none; display: flex; background: linear-gradient(90deg, #3b3735 0, #3a2b27 72px, #383c3f 510px, #383a3c 760px, #3d302b 870px, #35281f 1020px, #28292b 1130px, #25282c 1230px, #383b3e 1370px, #393d41 1560px, #3b3532 1660px, #43291f 1700px, #362c28 1790px, #2b2c2e 1920px); color: #fff; }
.start { width: 72px; display: flex; align-items: center; padding-left: 24px; }
.wsearch { width: 432px; background: #f2f2f2; border: 2px solid #bdbdbd; display: flex; align-items: center; padding: 0 4px 0 16px; color: #2b2b2b; font-size: 22px; letter-spacing: -.29px; }
.wsearch span { margin: 2px 0 0 17px; }
.case { width: 108px; height: 48px; border-radius: 10px; background: #e2e2e2; margin-left: auto; display: flex; align-items: center; justify-content: center; }
.apps { display: flex; padding-left: 4px; }
.app { width: 62.900px; display: flex; align-items: center; justify-content: center; position: relative; }
.app u { position: absolute; left: 8px; width: 49px; bottom: 0; height: 3px; background: #76b9ed; }
.app .full { left: 0; width: 61px; }
.app .split { background: linear-gradient(90deg, #76b9ed 37px, #558ab4 37px); }
.app.tv { width: 71.500px; padding-right: 8px; }
.chrome { background: linear-gradient(90deg, #69696b 54px, #444 54px, #444 56px, #5c5a59 56px, #5c5a59 61px, transparent 61px); padding-right: 7px; }
.wd { font: 700 15px "Open Sans", sans-serif; fill: #fff; }
.n64 { font: 700 10px "Open Sans", sans-serif; fill: #222; }
.coins { width: 134px; padding-left: 26px; display: flex; align-items: center; gap: 14px; font-size: 20.500px; letter-spacing: -.4px; }
.coins span { padding-top: 1px; }
.tray { flex: 1; display: flex; align-items: center; justify-content: flex-end; }
.wifi { margin-left: 20px; }
.bat { margin-left: 14px; }
.cam { margin-left: 16px; }
.vol { margin-left: 16px; }
.clock { margin-left: 21px; width: 75px; font-size: 17.500px; line-height: 28px; letter-spacing: -.2px; text-align: center; }
.clock span { display: block; }
.clock .dt { letter-spacing: .3px; }
.note { margin: 0 30px 0 32px; }
.edge { width: 2px; height: 60px; background: #6b6b6b; margin-right: 6px; }

/* desktop watermark over everything */
.activate { position: absolute; left: 1498px; top: 904px; color: rgba(120,120,120,.5); white-space: nowrap; font-size: 28px; line-height: 38px; letter-spacing: .36px; }
.activate .sub { font-size: 20.500px; line-height: 32px; letter-spacing: .2px; }
```
